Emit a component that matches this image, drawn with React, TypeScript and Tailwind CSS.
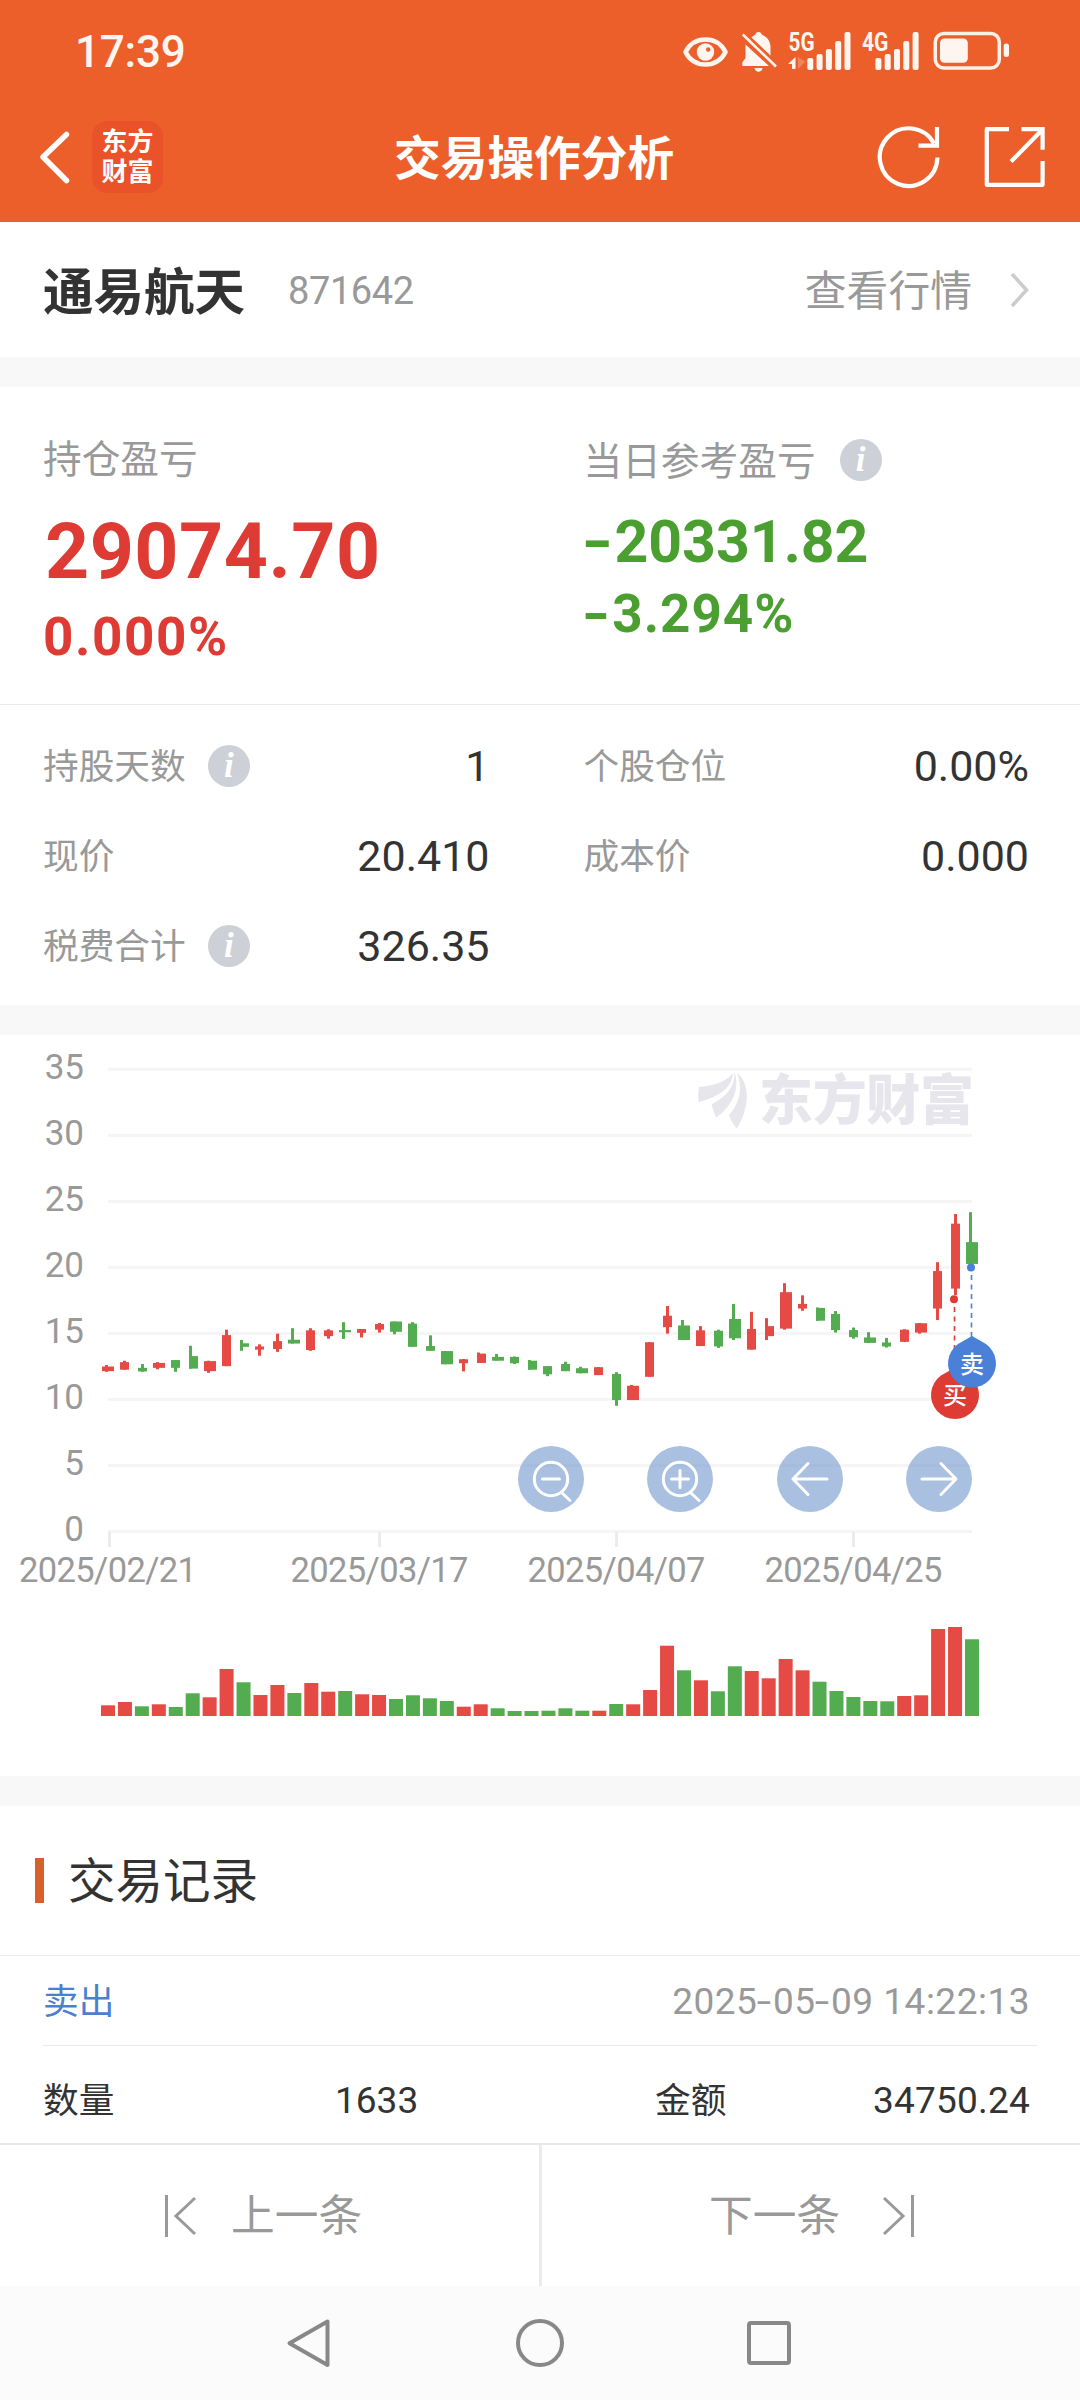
import type { ReactNode } from 'react';

type Candle = [dir: 'up' | 'down', high: number, top: number, bottom: number, low: number, volume: number];

const CANDLES: Candle[] = [
  ['up', 12.6, 12.49, 12.14, 12.09, 10.7],
  ['up', 12.93, 12.82, 12.25, 12.25, 14],
  ['down', 12.68, 12.39, 12.12, 12.09, 9.7],
  ['up', 12.82, 12.76, 12.39, 12.28, 11.7],
  ['down', 12.98, 12.98, 12.39, 12.09, 9],
  ['down', 14.06, 13.28, 12.33, 12.33, 22.7],
  ['up', 12.93, 12.9, 12.14, 12.01, 18.7],
  ['up', 15.28, 14.87, 12.52, 12.52, 47],
  ['down', 14.5, 14.25, 13.98, 13.68, 33.7],
  ['up', 14.17, 14.01, 13.77, 13.31, 21],
  ['up', 14.98, 14.41, 13.82, 13.6, 31],
  ['down', 15.39, 14.52, 14.23, 14.23, 23],
  ['up', 15.39, 15.23, 13.74, 13.68, 33],
  ['up', 15.31, 15.23, 14.79, 14.6, 24.3],
  ['down', 15.85, 15.25, 15.09, 14.58, 25],
  ['up', 15.33, 15.33, 15.04, 14.69, 21.7],
  ['up', 15.79, 15.71, 15.28, 15.06, 21],
  ['down', 15.9, 15.9, 15.12, 14.93, 17],
  ['down', 15.85, 15.74, 13.98, 13.98, 20.7],
  ['down', 14.85, 14.04, 13.68, 13.68, 17.7],
  ['down', 13.66, 13.66, 12.66, 12.66, 15],
  ['up', 13.06, 13.04, 12.74, 12.12, 9.3],
  ['up', 13.55, 13.47, 12.76, 12.76, 11.7],
  ['down', 13.44, 13.22, 12.93, 12.93, 7.7],
  ['down', 13.25, 13.22, 12.74, 12.68, 5],
  ['down', 12.98, 12.93, 12.25, 12.25, 5],
  ['down', 12.52, 12.52, 11.9, 11.76, 5.3],
  ['down', 12.85, 12.68, 12.14, 12.14, 7.7],
  ['down', 12.47, 12.36, 11.98, 11.98, 5.3],
  ['up', 12.44, 12.44, 11.84, 11.84, 5.3],
  ['down', 12.06, 11.93, 9.95, 9.52, 12],
  ['up', 11.09, 11.03, 9.95, 9.95, 11.7],
  ['up', 14.33, 14.33, 11.71, 11.71, 26],
  ['up', 17.07, 16.34, 15.47, 14.98, 70.3],
  ['down', 16.01, 15.6, 14.5, 14.5, 45.7],
  ['up', 15.55, 15.23, 14.04, 14.04, 35.7],
  ['down', 15.28, 15.2, 14.01, 13.9, 24.7],
  ['down', 17.23, 16.09, 14.63, 14.5, 49.7],
  ['up', 16.63, 15.33, 13.77, 13.77, 45],
  ['up', 16.15, 15.55, 14.79, 14.5, 37.7],
  ['up', 18.8, 18.12, 15.36, 15.28, 57],
  ['up', 17.88, 17.23, 16.88, 16.71, 45.7],
  ['down', 16.96, 16.93, 15.96, 15.96, 34.3],
  ['down', 16.69, 16.47, 15.25, 15.06, 25],
  ['down', 15.44, 15.25, 14.71, 14.6, 19],
  ['down', 15.09, 14.69, 14.28, 14.28, 15],
  ['down', 14.66, 14.31, 14.01, 13.93, 14.7],
  ['up', 15.31, 15.28, 14.36, 14.36, 20],
  ['up', 15.79, 15.77, 15.06, 14.98, 20.7],
  ['up', 20.39, 19.72, 16.88, 16.01, 87],
  ['up', 24.04, 23.31, 18.39, 17.9, 89],
  ['down', 24.18, 21.91, 20.26, 20.26, 76.7],
];

const RED = '#e64a44';
const GREEN = '#54ac50';

// chart geometry, in px from the top of the chart panel
const AXIS_TOP = 34.3;
const PX_PER_UNIT = 13.204;
const VOLUME_BASE = 681;
const priceY = (p: number) => AXIS_TOP + (35 - p) * PX_PER_UNIT;
// candle centre in 3px grid units
const slot = (i: number) => 36 + i * 5.647;

const TICKS = [
  { x: 109.5, label: '2025/02/21', text: 108 },
  { x: 379.5, label: '2025/03/17', text: 379.5 },
  { x: 616.5, label: '2025/04/07', text: 616.5 },
  { x: 853.5, label: '2025/04/25', text: 853.5 },
];

function StatusIcons() {
  const bars = [
    [58, 12],
    [54, 16],
    [49, 21],
    [41, 29],
    [32, 38],
  ];
  return (
    <svg width="340" height="50" viewBox="676 26 340 50" fill="#fff5f0">
      <path
        d="M685.5 52C690 43 697 39.5 705.500 39.5S721 43 725.500 52C721 61 714 64.500 705.500 64.500S690 61 685.500 52Z"
        fill="none"
        stroke="#fff5f0"
        strokeWidth="4.600"
        strokeLinejoin="round"
      />
      <circle cx="705.500" cy="52" r="8.700" />
      <circle cx="708.200" cy="49.500" r="2.200" fill="#ec5f2b" />
      <path d="M745.500 44.500L769 66H742.300V62.500L745.500 58Z" />
      <path d="M751.500 37.500C753 36 754.500 35 755.500 34.500C756 31.300 761 31.300 761.500 34.500C767 36.500 770.500 41 770.500 47V55.500Z" />
      <path d="M754.500 68H762.500C762 73 755 73 754.500 68Z" />
      <path d="M742.800 34.500L776 66.500" stroke="#fff5f0" strokeWidth="2.600" />
      <text x="788.500" y="51" fontSize="26" fontWeight="700" textLength="26" lengthAdjust="spacingAndGlyphs">5G</text>
      <path d="M795.500 57V69H792V64H788Z" />
      <path d="M798 57V69L805.500 61.500Z" opacity=".25" />
      <text x="862" y="51" fontSize="26" fontWeight="700" textLength="26.500" lengthAdjust="spacingAndGlyphs">4G</text>
      {bars.map(([y, h], i) => (
        <g key={y}>
          <rect x={807.3 + i * 9.3} y={y} width="6" height={h} rx="2" />
          <rect x={875.4 + i * 9.3} y={y} width="6" height={h} rx="2" />
        </g>
      ))}
      <rect x="935.300" y="33.500" width="64" height="34.500" rx="8.500" fill="none" stroke="#fff0e8" strokeWidth="3.500" />
      <rect x="940" y="38.500" width="27.800" height="24.200" rx="4.500" />
      <rect x="1003.700" y="43.500" width="5.300" height="13.500" rx="2.500" />
    </svg>
  );
}

function InfoDot() {
  return (
    <span className="flex h-[42px] w-[42px] shrink-0 items-center justify-center rounded-full bg-[#cdd0d6]">
      <span className="font-['Liberation_Serif',serif] text-[35px] leading-[42px] font-bold text-white italic">i</span>
    </span>
  );
}

function Stat({ label, value, info }: { label: string; value: string; info?: boolean }) {
  return (
    <div className="flex h-[90px] items-center">
      <span className="pt-1 text-[35.700px] leading-none text-[#999]">{label}</span>
      {info && (
        <span className="ml-[22px]">
          <InfoDot />
        </span>
      )}
      <span className="ml-auto text-[43px] leading-none text-[#333]">{value}</span>
    </div>
  );
}

function Brand() {
  return (
    <g fill="#e6e6ec">
      <path d="M699 1087C711 1086 725 1083 733 1073C732 1088 719 1097 698.500 1102Q697.500 1094 699 1087Z" />
      <path d="M734.500 1072C740 1088 733 1106 716 1117.500Q713 1110 711.500 1104.500C723 1098 735 1090 734.500 1072Z" />
      <path d="M737 1072.500C748 1082 752 1103 737 1128.500Q731 1122 729 1115C739 1104 743.500 1090 737 1072.500Z" />
      <text x="759" y="1120" fontSize="54" fontWeight="900" textLength="215">东方财富</text>
    </g>
  );
}

function ChartButton({ cx, children }: { cx: number; children: ReactNode }) {
  return (
    <g transform={`translate(${cx} 444)`}>
      <circle r="33" fill="#7096cd" fillOpacity=".6" />
      <g fill="none" stroke="#fff" strokeWidth="3" strokeLinecap="round" strokeLinejoin="round">
        {children}
      </g>
    </g>
  );
}

function Pin({ x, y, color, label }: { x: number; y: number; color: string; label: string }) {
  return (
    <g transform={`translate(${x} ${y})`}>
      <path d="M0 -27.500L14 -19.500A24 24 0 1 1 -14 -19.500Z" fill={color} />
      <text y="9" fontSize="24" fontWeight="500" fill="#fff" textAnchor="middle">
        {label}
      </text>
    </g>
  );
}

function Chart() {
  return (
    <svg width="1080" height="741" viewBox="0 0 1080 741" className="block">
      {[35, 30, 25, 20, 15, 10, 5, 0].map((v) => (
        <g key={v}>
          <rect x="108" y={priceY(v) - 1.5} width="864" height="3" fill="#f5f5f5" />
          <text x="84" y={priceY(v) + 10} fontSize="35" fill="#999" textAnchor="end">
            {v}
          </text>
        </g>
      ))}
      {TICKS.map((t) => (
        <g key={t.label}>
          <rect x={t.x - 1.5} y="497" width="3" height="15" fill="#ececec" />
          <text x={t.text - 89} y="547" fontSize="34.500" fill="#999" textLength="178">
            {t.label}
          </text>
        </g>
      ))}
      <g transform="translate(0 -1035)">
        <Brand />
      </g>

      {CANDLES.map(([dir, high, top, bottom, low, volume], i) => {
        const c = slot(i);
        const left = Math.round(c - 1.64) * 3;
        const right = Math.round(c + 1.64) * 3;
        return (
          <g key={i} fill={dir === 'up' ? RED : GREEN}>
            <rect x={Math.floor(c - 0.27) * 3} y={priceY(high)} width="3" height={priceY(low) - priceY(high)} />
            <rect x={left} y={priceY(top)} width={right - left} height={priceY(bottom) - priceY(top)} />
            <rect x={c * 3 - 7} y={VOLUME_BASE - volume} width="14" height={volume} />
          </g>
        );
      })}

      <circle cx="954" cy="264.300" r="4" fill="#dd3b33" />
      <path d="M954.500 272V316" stroke="#dd3b33" strokeWidth="1.600" strokeDasharray="5 4.500" />
      <circle cx="971" cy="232.500" r="4" fill="#4a80d8" />
      <path d="M971.500 240V304" stroke="#4a80d8" strokeWidth="1.600" strokeDasharray="5 4.500" />
      <Pin x={955} y={360} color="#dd3b33" label="买" />
      <Pin x={972} y={328.5} color="#4a80d8" label="卖" />

      <ChartButton cx={551}>
        <circle r="16.700" />
        <path d="M-8.500 0H8.500M11.500 14.500L19 21.500" />
      </ChartButton>
      <ChartButton cx={680}>
        <circle r="16.700" />
        <path d="M-8.500 0H8.500M0 -8.500V8.500M11.500 14.500L19 21.500" />
      </ChartButton>
      <ChartButton cx={810}>
        <path d="M17 0H-17M-2 -15.500L-17 0L-2 15.500" />
      </ChartButton>
      <ChartButton cx={939}>
        <path d="M-17 0H17M2 -15.500L17 0L2 15.500" />
      </ChartButton>
    </svg>
  );
}

// Roboto's hyphen is short next to the figures, so it is stretched
function Dash() {
  return <span className="mr-[0.09em] ml-[0.04em] inline-block origin-center scale-x-[1.4]">-</span>;
}

export default function App() {
  return (
    <div className="flex h-[2400px] w-[1080px] flex-col bg-white font-['Roboto','Noto_Sans_CJK_SC',sans-serif] text-[#333]">
      <header className="h-[222px] bg-[#ec5f2b] text-white">
        <div className="flex h-[102px] items-center justify-between pr-16 pl-[75px]">
          <span className="pt-0.5 text-[44px] leading-none font-medium tracking-[-0.200px] text-[#fff5f0]">17:39</span>
          <StatusIcons />
        </div>
        <div className="flex h-[110px] items-center pr-[33px] pl-[38px]">
          <svg width="34" height="56" viewBox="0 0 34 56" fill="none" stroke="#fff" strokeWidth="5.500" strokeLinecap="round" strokeLinejoin="round">
            <path d="M28.500 5.500L5 28L28.500 51.500" />
          </svg>
          <div className="ml-5 flex h-[72px] w-[71px] flex-col items-center justify-center rounded-[15px] bg-[#ea522a] text-[26px] leading-[30px] font-bold">
            <span>东方</span>
            <span>财富</span>
          </div>
          <h1 className="ml-[231px] pt-1 text-[46.700px] leading-none font-bold">交易操作分析</h1>
          <svg className="ml-auto" width="172" height="68" viewBox="875 122 172 68" fill="none" stroke="#fff" strokeWidth="4.200">
            <path d="M937.400 156.500A28.800 28.800 0 1 1 934 142.500" />
            <path d="M937 126V144.700H918.500" />
            <path d="M1009 128.200H986.800V183.800H1042.600V160" strokeLinejoin="round" />
            <path d="M1021.500 128.200H1042.600V148.700M1042 129L1011 160.500" />
          </svg>
        </div>
      </header>

      <section className="flex h-[135px] items-center pr-[49px] pl-[43px]">
        <h2 className="pt-[7px] text-[50.500px] leading-none font-bold">通易航天</h2>
        <span className="ml-[43px] pt-[3px] text-[38px] leading-none tracking-[-0.400px] text-[#999]">871642</span>
        <span className="ml-auto pt-1 text-[41.800px] leading-none text-[#999]">查看行情</span>
        <svg className="ml-[37px]" width="22" height="36" viewBox="0 0 22 36" fill="none" stroke="#ccc" strokeWidth="3.600">
          <path d="M3 2L17.500 18L3 34" />
        </svg>
      </section>
      <div className="h-[30px] bg-[#f8f8f8]" />

      <section className="grid h-[318px] grid-cols-2 border-b border-[#ebebeb] pl-[43px]">
        <div className="flex flex-col pt-[52px]">
          <span className="text-[38.700px] leading-[42px] text-[#999]">持仓盈亏</span>
          <span className="mt-[32px] pl-0.5 text-[77px] leading-[78px] font-bold tracking-[0.500px] text-[#dd3b33]">29074.70</span>
          <span className="mt-[18px] text-[53px] leading-[56px] font-bold tracking-[1.600px] text-[#dd3b33]">0.000%</span>
        </div>
        <div className="flex flex-col pt-[50px] pl-[22px]">
          <span className="flex items-center text-[38.700px] leading-[42px] text-[#999]">
            <span className="pt-1">当日参考盈亏</span>
            <span className="ml-6">
              <InfoDot />
            </span>
          </span>
          <span className="mt-[29px] text-[59px] leading-[60px] font-bold text-[#4a9f30]">
            <Dash />
            20331.82
          </span>
          <span className="mt-[14px] text-[53px] leading-[56px] font-bold tracking-[1px] text-[#4a9f30]">
            <Dash />
            3.294%
          </span>
        </div>
      </section>

      <section className="grid h-[300px] grid-cols-2 content-start pt-4 pl-[43px]">
        <div className="pr-[72px]">
          <Stat label="持股天数" value="1" info />
          <Stat label="现价" value="20.410" />
          <Stat label="税费合计" value="326.35" info />
        </div>
        <div className="pr-[51px] pl-[22px]">
          <Stat label="个股仓位" value="0.00%" />
          <Stat label="成本价" value="0.000" />
        </div>
      </section>
      <div className="h-[30px] bg-[#f8f8f8]" />

      <Chart />
      <div className="h-[30px] bg-[#f8f8f8]" />

      <section className="h-[337px] overflow-hidden">
        <div className="flex h-[150px] items-center border-b border-[#ebebeb] pl-[35px]">
          <span className="h-[45px] w-[9px] bg-[#d9602b]" />
          <h3 className="ml-6 pt-[5px] text-[47.500px] leading-none">交易记录</h3>
        </div>
        <div className="mr-[43px] ml-[43px] flex h-[90px] items-center justify-between border-b border-[#ebebeb] pr-[7px]">
          <span className="pt-1 text-[35.700px] leading-none text-[#4a80d0]">卖出</span>
          <span className="pt-0.5 text-[37px] leading-none tracking-[0.500px] text-[#999]">
            2025
            <Dash />
            05
            <Dash />
            09 14:22:13
          </span>
        </div>
        <div className="flex h-[108px] items-center pr-[50px] pl-[43px]">
          <span className="w-[292px] pt-1 text-[35.700px] leading-none">数量</span>
          <span className="w-[320px] text-[37px] leading-none">1633</span>
          <span className="pt-1 text-[35.700px] leading-none">金额</span>
          <span className="ml-auto text-[37px] leading-none tracking-[0.200px]">34750.24</span>
        </div>
      </section>

      <div className="flex h-[143px] border-t-2 border-[#e8e8e8] text-[43.700px] leading-none text-[#999]">
        <div className="flex w-[542px] items-center border-r-[3px] border-[#ebebeb] pl-[164px]">
          <svg width="34" height="44" viewBox="0 0 34 44" fill="none" stroke="#999" strokeWidth="3">
            <path d="M2.500 1V43M31 4L12 22L31 40" />
          </svg>
          <span className="ml-[33px] pt-0.5">上一条</span>
        </div>
        <div className="flex items-center pl-[167px]">
          <span className="pt-0.5">下一条</span>
          <svg className="ml-[41px]" width="34" height="44" viewBox="0 0 34 44" fill="none" stroke="#999" strokeWidth="3">
            <path d="M31.500 1V43M3 4L22 22L3 40" />
          </svg>
        </div>
      </div>

      <nav className="flex flex-1 items-center bg-[#fbfbfb] pl-[286px]">
        <svg width="508" height="52" viewBox="286 2317 508 52" fill="none" stroke="#888" strokeWidth="4" strokeLinejoin="round">
          <path d="M327.500 2321.500V2365L289.500 2343.200Z" />
          <circle cx="540" cy="2343" r="22" />
          <rect x="749" y="2323" width="40" height="40" rx="2" />
        </svg>
      </nav>
    </div>
  );
}
